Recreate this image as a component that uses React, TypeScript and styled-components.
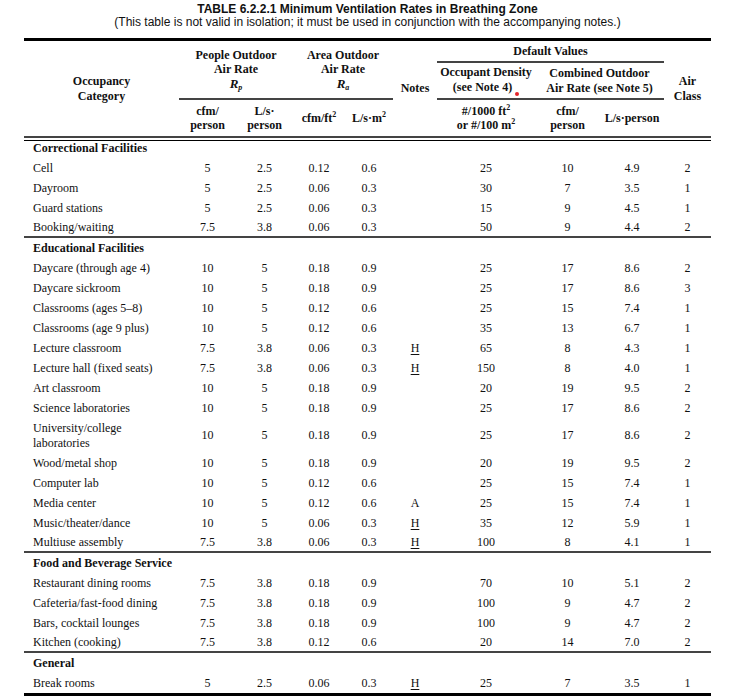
import styled, { createGlobalStyle } from 'styled-components';

const GlobalStyle = createGlobalStyle`
  body {
    margin: 0;
    background: #fff;
  }
  * {
    box-sizing: border-box;
  }
`;

const Page = styled.div`
  width: 735px;
  padding-top: 2px;
  color: #111;
`;

const Title = styled.h1`
  margin: 0;
  font-family: 'Liberation Sans', Arial, sans-serif;
  font-weight: 700;
  font-size: 12px;
  line-height: 14px;
  text-align: center;
`;

const Subtitle = styled.p`
  margin: 0;
  font-family: 'Liberation Sans', Arial, sans-serif;
  font-size: 12px;
  line-height: 13px;
  text-align: center;
`;

const Table = styled.table`
  margin: 9px 24px 0;
  width: 687px;
  table-layout: fixed;
  border-collapse: separate;
  border-spacing: 0;
  border-top: 3px solid #000;
  border-bottom: 3px solid #000;
  font-family: 'Liberation Serif', 'Times New Roman', serif;
  font-size: 12px;
`;

const Col = styled.col<{ $w: number }>`
  width: ${(p) => p.$w}px;
`;

const HeadRow = styled.tr<{ $h: number }>`
  height: ${(p) => p.$h}px;
`;

const Th = styled.th<{ $rule?: boolean; $double?: boolean; $h?: number }>`
  padding: 0;
  height: ${(p) => (p.$h ? `${p.$h}px` : 'auto')};
  font-weight: 700;
  line-height: 14.5px;
  text-align: center;
  vertical-align: middle;
  border-bottom: ${(p) => (p.$rule || p.$double ? '2px solid #444' : 'none')};
  box-shadow: ${(p) => (p.$double ? '0 2px 0 #fff, 0 3px 0 #000' : 'none')};
`;

const Sym = styled.i`
  font-style: italic;
  font-weight: 700;
  font-size: 13px;
`;

const Sub = styled.sub`
  font-size: 8px;
  line-height: 0;
  vertical-align: -2px;
`;

const Sup = styled.sup`
  font-size: 8px;
  vertical-align: 5px;
  line-height: 0;
`;

const RedDot = styled.span`
  display: inline-block;
  width: 4px;
  height: 4px;
  margin-left: 3px;
  border-radius: 50%;
  background: #e3242b;
  vertical-align: -5px;
`;

const Row = styled.tr<{ $tall?: boolean }>`
  height: ${(p) => (p.$tall ? 35 : 20)}px;
`;

const Td = styled.td<{ $rule?: boolean }>`
  padding: 0;
  text-align: center;
  vertical-align: middle;
  line-height: 15px;
  border-bottom: ${(p) => (p.$rule ? '2px solid #444' : 'none')};
`;

const CatTd = styled(Td)`
  text-align: left;
  padding-left: 9px;
`;

const SectionTd = styled.td`
  padding: 0 0 0 9px;
  font-weight: 700;
  line-height: 15px;
  vertical-align: middle;
`;

const NoteMark = styled.span<{ $link?: boolean }>`
  text-decoration: ${(p) => (p.$link ? 'underline' : 'none')};
  text-underline-offset: 2px;
`;

type Item = {
  name: React.ReactNode;
  v: string[];
  note?: string;
  tall?: boolean;
};

type Section = { title: string; items: Item[] };

const sections: Section[] = [
  {
    title: 'Correctional Facilities',
    items: [
      { name: 'Cell', v: ['5', '2.5', '0.12', '0.6', '25', '10', '4.9', '2'] },
      { name: 'Dayroom', v: ['5', '2.5', '0.06', '0.3', '30', '7', '3.5', '1'] },
      { name: 'Guard stations', v: ['5', '2.5', '0.06', '0.3', '15', '9', '4.5', '1'] },
      { name: 'Booking/waiting', v: ['7.5', '3.8', '0.06', '0.3', '50', '9', '4.4', '2'] },
    ],
  },
  {
    title: 'Educational Facilities',
    items: [
      { name: 'Daycare (through age 4)', v: ['10', '5', '0.18', '0.9', '25', '17', '8.6', '2'] },
      { name: 'Daycare sickroom', v: ['10', '5', '0.18', '0.9', '25', '17', '8.6', '3'] },
      { name: 'Classrooms (ages 5–8)', v: ['10', '5', '0.12', '0.6', '25', '15', '7.4', '1'] },
      { name: 'Classrooms (age 9 plus)', v: ['10', '5', '0.12', '0.6', '35', '13', '6.7', '1'] },
      { name: 'Lecture classroom', note: 'H', v: ['7.5', '3.8', '0.06', '0.3', '65', '8', '4.3', '1'] },
      { name: 'Lecture hall (fixed seats)', note: 'H', v: ['7.5', '3.8', '0.06', '0.3', '150', '8', '4.0', '1'] },
      { name: 'Art classroom', v: ['10', '5', '0.18', '0.9', '20', '19', '9.5', '2'] },
      { name: 'Science laboratories', v: ['10', '5', '0.18', '0.9', '25', '17', '8.6', '2'] },
      {
        name: (
          <>
            University/college
            <br />
            laboratories
          </>
        ),
        tall: true,
        v: ['10', '5', '0.18', '0.9', '25', '17', '8.6', '2'],
      },
      { name: 'Wood/metal shop', v: ['10', '5', '0.18', '0.9', '20', '19', '9.5', '2'] },
      { name: 'Computer lab', v: ['10', '5', '0.12', '0.6', '25', '15', '7.4', '1'] },
      { name: 'Media center', note: 'A', v: ['10', '5', '0.12', '0.6', '25', '15', '7.4', '1'] },
      { name: 'Music/theater/dance', note: 'H', v: ['10', '5', '0.06', '0.3', '35', '12', '5.9', '1'] },
      { name: 'Multiuse assembly', note: 'H', v: ['7.5', '3.8', '0.06', '0.3', '100', '8', '4.1', '1'] },
    ],
  },
  {
    title: 'Food and Beverage Service',
    items: [
      { name: 'Restaurant dining rooms', v: ['7.5', '3.8', '0.18', '0.9', '70', '10', '5.1', '2'] },
      { name: 'Cafeteria/fast-food dining', v: ['7.5', '3.8', '0.18', '0.9', '100', '9', '4.7', '2'] },
      { name: 'Bars, cocktail lounges', v: ['7.5', '3.8', '0.18', '0.9', '100', '9', '4.7', '2'] },
      { name: 'Kitchen (cooking)', v: ['7.5', '3.8', '0.12', '0.6', '20', '14', '7.0', '2'] },
    ],
  },
  {
    title: 'General',
    items: [{ name: 'Break rooms', note: 'H', v: ['5', '2.5', '0.06', '0.3', '25', '7', '3.5', '1'] }],
  },
];

const widths = [155, 57, 57, 52, 48, 44, 98, 65, 64, 47];

export default function App() {
  return (
    <Page>
      <GlobalStyle />
      <Title>TABLE 6.2.2.1 Minimum Ventilation Rates in Breathing Zone</Title>
      <Subtitle>
        (This table is not valid in isolation; it must be used in conjunction with the accompanying notes.)
      </Subtitle>
      <Table>
        <colgroup>
          {widths.map((w, i) => (
            <Col key={i} $w={w} />
          ))}
        </colgroup>
        <thead>
          <HeadRow $h={22}>
            <Th rowSpan={3} $double>
              Occupancy
              <br />
              Category
            </Th>
            <Th colSpan={2} rowSpan={2} $rule>
              People Outdoor
              <br />
              Air Rate
              <br />
              <Sym>
                R<Sub>p</Sub>
              </Sym>
            </Th>
            <Th colSpan={2} rowSpan={2} $rule>
              Area Outdoor
              <br />
              Air Rate
              <br />
              <Sym>
                R<Sub>a</Sub>
              </Sym>
            </Th>
            <Th rowSpan={3} $double>
              Notes
            </Th>
            <Th colSpan={3} $rule $h={22}>
              Default Values
            </Th>
            <Th rowSpan={3} $double>
              Air
              <br />
              Class
            </Th>
          </HeadRow>
          <HeadRow $h={37}>
            <Th $rule $h={37}>
              Occupant Density
              <br />
              (see Note 4)
              <RedDot />
            </Th>
            <Th colSpan={2} $rule $h={37}>
              Combined Outdoor
              <br />
              Air Rate (see Note 5)
            </Th>
          </HeadRow>
          <HeadRow $h={38}>
            <Th $double $h={38}>
              cfm/
              <br />
              person
            </Th>
            <Th $double $h={38}>
              L/s·
              <br />
              person
            </Th>
            <Th $double $h={38}>
              cfm/ft<Sup>2</Sup>
            </Th>
            <Th $double $h={38}>
              L/s·m<Sup>2</Sup>
            </Th>
            <Th $double $h={38}>
              #/1000 ft<Sup>2</Sup>
              <br />
              or #/100 m<Sup>2</Sup>
            </Th>
            <Th $double $h={38}>
              cfm/
              <br />
              person
            </Th>
            <Th $double $h={38}>
              L/s·person
            </Th>
          </HeadRow>
        </thead>
        <tbody>
          {sections.map((s, si) => (
            <SectionRows key={s.title} section={s} last={si === sections.length - 1} />
          ))}
        </tbody>
      </Table>
    </Page>
  );
}

function SectionRows({ section, last }: { section: Section; last: boolean }) {
  return (
    <>
      <Row>
        <SectionTd colSpan={10}>{section.title}</SectionTd>
      </Row>
      {section.items.map((it, i) => {
        const rule = !last && i === section.items.length - 1;
        return (
          <Row key={i} $tall={it.tall}>
            <CatTd $rule={rule}>{it.name}</CatTd>
            {it.v.slice(0, 4).map((n, j) => (
              <Td key={j} $rule={rule}>
                {n}
              </Td>
            ))}
            <Td $rule={rule}>
              {it.note && <NoteMark $link={it.note === 'H'}>{it.note}</NoteMark>}
            </Td>
            {it.v.slice(4).map((n, j) => (
              <Td key={j} $rule={rule}>
                {n}
              </Td>
            ))}
          </Row>
        );
      })}
    </>
  );
}
